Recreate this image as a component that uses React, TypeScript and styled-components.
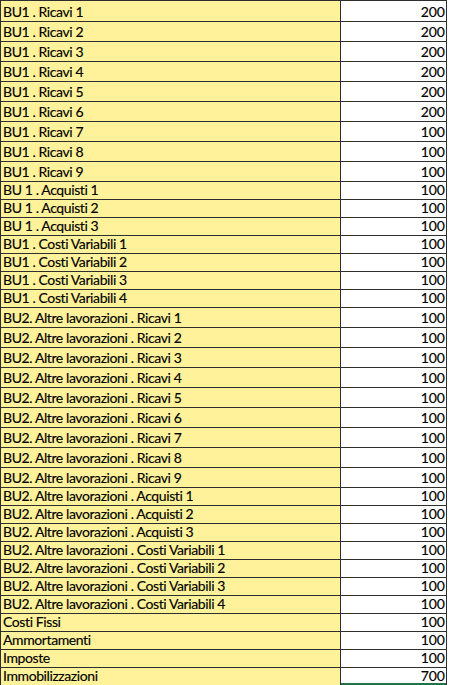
import React from 'react';
import styled, { createGlobalStyle } from 'styled-components';

type Row = { label: string; value: number; h: number };

const bu1Ricavi = [200, 200, 200, 200, 200, 200, 100, 100, 100];

const rows: Row[] = [
  ...bu1Ricavi.map((v, i) => ({ label: `BU1 . Ricavi ${i + 1}`, value: v, h: i === 0 ? 21 : 20 })),
  ...[1, 2, 3].map((n) => ({ label: `BU 1 . Acquisti ${n}`, value: 100, h: 18 })),
  ...[1, 2, 3, 4].map((n) => ({ label: `BU1 . Costi Variabili ${n}`, value: 100, h: 18 })),
  ...[1, 2, 3, 4, 5, 6, 7, 8, 9].map((n) => ({
    label: `BU2. Altre lavorazioni . Ricavi ${n}`,
    value: 100,
    h: 20,
  })),
  ...[1, 2, 3].map((n) => ({ label: `BU2. Altre lavorazioni . Acquisti ${n}`, value: 100, h: 18 })),
  ...[1, 2, 3, 4].map((n) => ({
    label: `BU2. Altre lavorazioni . Costi Variabili ${n}`,
    value: 100,
    h: 18,
  })),
  { label: 'Costi Fissi', value: 100, h: 18 },
  { label: 'Ammortamenti', value: 100, h: 18 },
  { label: 'Imposte', value: 100, h: 18 },
  { label: 'Immobilizzazioni', value: 700, h: 18 },
];

export default function App() {
  return (
    <>
      <GlobalStyle />
      <Sheet>
        {rows.map((r, i) => (
          <SheetRow key={r.label} $h={r.h}>
            <LabelCell>{r.label}</LabelCell>
            <ValueCell $selected={i === rows.length - 1}>{r.value}</ValueCell>
          </SheetRow>
        ))}
      </Sheet>
    </>
  );
}

const GlobalStyle = createGlobalStyle`
  body {
    margin: 0;
    background: #ffffff;
    overflow: hidden;
  }
`;

const Sheet = styled.div`
  width: 447px;
  box-sizing: border-box;
  border-top: 1px solid #2e2e2e;
  border-left: 1px solid #2e2e2e;
  border-right: 1px solid #2e2e2e;
  font-family: 'Lato', 'Liberation Sans', sans-serif;
  font-size: 14px;
  color: #000;
`;

const SheetRow = styled.div<{ $h: number }>`
  display: grid;
  grid-template-columns: 340px 1fr;
  height: ${(p) => p.$h}px;
  box-sizing: border-box;
  border-bottom: 1px solid #2e2e2e;
`;

const LabelCell = styled.div`
  display: flex;
  align-items: flex-end;
  padding: 0 0 2px 2px;
  background: #fff29a;
  border-right: 1px solid #2e2e2e;
  line-height: 14px;
  letter-spacing: -0.4px;
  white-space: nowrap;
  -webkit-text-stroke: 0.15px #000;
`;

const ValueCell = styled.div<{ $selected?: boolean }>`
  display: flex;
  align-items: flex-end;
  justify-content: flex-end;
  padding: 0 1px 2px 0;
  background: #ffffff;
  line-height: 14px;
  -webkit-text-stroke: 0.15px #000;
  box-shadow: ${(p) => (p.$selected ? 'inset 0 -2px 0 #217346' : 'none')};
`;
